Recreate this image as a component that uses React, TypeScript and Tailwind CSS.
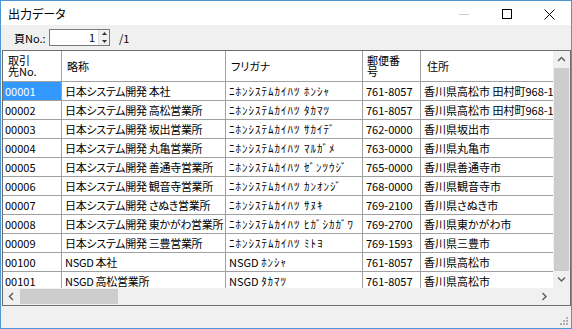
import React from "react";

const rows: string[][] = [
  ["00001", "日本システム開発 本社", "ﾆﾎﾝｼｽﾃﾑｶｲﾊﾂ ﾎﾝｼｬ", "761-8057", "香川県高松市 田村町968-1"],
  ["00002", "日本システム開発 高松営業所", "ﾆﾎﾝｼｽﾃﾑｶｲﾊﾂ ﾀｶﾏﾂ", "761-8057", "香川県高松市 田村町968-1"],
  ["00003", "日本システム開発 坂出営業所", "ﾆﾎﾝｼｽﾃﾑｶｲﾊﾂ ｻｶｲﾃﾞ", "762-0000", "香川県坂出市"],
  ["00004", "日本システム開発 丸亀営業所", "ﾆﾎﾝｼｽﾃﾑｶｲﾊﾂ ﾏﾙｶﾞﾒ", "763-0000", "香川県丸亀市"],
  ["00005", "日本システム開発 善通寺営業所", "ﾆﾎﾝｼｽﾃﾑｶｲﾊﾂ ｾﾞﾝﾂｳｼﾞ", "765-0000", "香川県善通寺市"],
  ["00006", "日本システム開発 観音寺営業所", "ﾆﾎﾝｼｽﾃﾑｶｲﾊﾂ ｶﾝｵﾝｼﾞ", "768-0000", "香川県観音寺市"],
  ["00007", "日本システム開発 さぬき営業所", "ﾆﾎﾝｼｽﾃﾑｶｲﾊﾂ ｻﾇｷ", "769-2100", "香川県さぬき市"],
  ["00008", "日本システム開発 東かがわ営業所", "ﾆﾎﾝｼｽﾃﾑｶｲﾊﾂ ﾋｶﾞｼｶｶﾞﾜ", "769-2700", "香川県東かがわ市"],
  ["00009", "日本システム開発 三豊営業所", "ﾆﾎﾝｼｽﾃﾑｶｲﾊﾂ ﾐﾄﾖ", "769-1593", "香川県三豊市"],
  ["00100", "NSGD 本社", "NSGD ﾎﾝｼｬ", "761-8057", "香川県高松市"],
  ["00101", "NSGD 高松営業所", "NSGD ﾀｶﾏﾂ", "761-8057", "香川県高松市"],
];

const Chevron = ({ dir }: { dir: "up" | "down" | "left" | "right" }) => {
  const pts: Record<string, string> = {
    up: "1,5 4.5,1.5 8,5",
    down: "1,1.5 4.5,5 8,1.5",
    left: "5,1 1.5,4.5 5,8",
    right: "1.5,1 5,4.5 1.5,8",
  };
  const vert = dir === "up" || dir === "down";
  return (
    <svg width={vert ? 9 : 7} height={vert ? 7 : 9} viewBox={vert ? "0 0 9 7" : "0 0 7 9"}>
      <polyline points={pts[dir]} fill="none" stroke="#606060" strokeWidth="1.5" />
    </svg>
  );
};

const Kana = ({ text }: { text: string }) => {
  if (text.startsWith("NSGD ")) {
    return (
      <>
        <span className="tracking-normal">NSGD </span>
        {text.slice(5)}
      </>
    );
  }
  return <>{text}</>;
};

export default function App() {
  return (
    <div className="w-[572px] h-[329px] border border-[#4e95d3] flex flex-col bg-[#f0f0f0] text-[11px] text-black overflow-hidden font-[family-name:'Noto_Sans_CJK_JP','Liberation_Sans',sans-serif] [font-feature-settings:'palt']">
      {/* Title bar */}
      <div className="h-[24px] bg-white flex items-center shrink-0">
        <div className="pl-[7px] pt-[1px] flex-1 leading-[12px] text-[12px]">出力データ</div>
        <div className="flex h-full">
          <div className="w-[43px] flex items-center justify-center pt-[2px]">
            <div className="w-[10px] h-[1px] bg-[#c8c8c8]" />
          </div>
          <div className="w-[43px] flex items-center justify-center pt-[2px]">
            <div className="w-[10px] h-[10px] border border-black" />
          </div>
          <div className="w-[43px] flex items-center justify-center pt-[2px]">
            <svg width="11" height="11" viewBox="0 0 11 11">
              <path d="M0.5 0.5 L10.5 10.5 M10.5 0.5 L0.5 10.5" stroke="#000" strokeWidth="1" />
            </svg>
          </div>
        </div>
      </div>

      {/* Toolbar */}
      <div className="h-[25px] flex items-center shrink-0">
        <div className="pl-[13px] w-[47px] leading-[12px] whitespace-nowrap">頁No.:</div>
        <div className="ml-[1px] w-[61px] h-[17px] border border-[#7a7a7a] bg-white flex">
          <div className="flex-1 text-right pr-[3px] leading-[15px]">1</div>
          <div className="w-[11px] flex flex-col border-l border-[#e0e0e0] bg-[#f0f0f0]">
            <div className="flex-1 flex items-center justify-center">
              <svg width="5" height="3" viewBox="0 0 5 3"><polygon points="0,3 2.5,0 5,3" fill="#333" /></svg>
            </div>
            <div className="flex-1 flex items-center justify-center">
              <svg width="5" height="3" viewBox="0 0 5 3"><polygon points="0,0 2.5,3 5,0" fill="#333" /></svg>
            </div>
          </div>
        </div>
        <div className="ml-[9px] leading-[12px]">/1</div>
      </div>

      {/* Grid */}
      <div className="ml-[1px] h-[256px] shrink-0 border border-[#6e6e6e] flex">
        <div className="flex-1 flex flex-col min-w-0">
          <div className="flex-1 bg-white overflow-hidden">
            {/* Header */}
            <div className="flex h-[31px] border-b border-[#a0a0a0] whitespace-nowrap">
              <div className="w-[59px] shrink-0 border-r border-[#a0a0a0] pl-[5px] leading-[11px] flex flex-col justify-center">
                <span>取引</span>
                <span>先No.</span>
              </div>
              <div className="w-[164px] shrink-0 border-r border-[#a0a0a0] pl-[5px] flex items-center">略称</div>
              <div className="w-[137px] shrink-0 border-r border-[#a0a0a0] pl-[5px] flex items-center">フリガナ</div>
              <div className="w-[58px] shrink-0 border-r border-[#a0a0a0] pl-[4px] leading-[11px] flex flex-col justify-center">
                <span>郵便番</span>
                <span>号</span>
              </div>
              <div className="w-[160px] shrink-0 pl-[6px] flex items-center">住所</div>
            </div>
            {/* Rows */}
            {rows.map((r, i) => (
              <div key={r[0]} className="flex h-[19px] border-b border-[#a0a0a0] whitespace-nowrap leading-[18px]">
                <div
                  className={
                    i === 0
                      ? "w-[59px] shrink-0 border-r border-[#a0a0a0] pl-[2px] bg-[#3399ff] text-white"
                      : "w-[59px] shrink-0 border-r border-[#a0a0a0] pl-[2px]"
                  }
                >
                  {r[0]}
                </div>
                <div className="w-[164px] shrink-0 border-r border-[#a0a0a0] pl-[3px] overflow-hidden tracking-[-0.3px]">{r[1]}</div>
                <div className="w-[137px] shrink-0 border-r border-[#a0a0a0] pl-[3px] overflow-hidden tracking-[1px] [font-feature-settings:normal]">
                  <Kana text={r[2]} />
                </div>
                <div className="w-[58px] shrink-0 border-r border-[#a0a0a0] pl-[3px]">{r[3]}</div>
                <div className="w-[160px] shrink-0 pl-[3px]">{r[4]}</div>
              </div>
            ))}
          </div>
          {/* Horizontal scrollbar */}
          <div className="h-[17px] shrink-0 flex bg-[#f0f0f0]">
            <div className="w-[17px] flex items-center justify-center">
              <Chevron dir="left" />
            </div>
            <div className="flex-1 py-[1px]">
              <div className="w-[98px] h-full bg-[#cdcdcd]" />
            </div>
            <div className="w-[17px] flex items-center justify-center">
              <Chevron dir="right" />
            </div>
          </div>
        </div>
        {/* Vertical scrollbar */}
        <div className="w-[17px] shrink-0 flex flex-col bg-[#f0f0f0]">
          <div className="h-[17px] flex items-center justify-center">
            <Chevron dir="up" />
          </div>
          <div className="flex-1 px-[1px]">
            <div className="w-full h-[203px] bg-[#cdcdcd]" />
          </div>
          <div className="h-[17px] flex items-center justify-center">
            <Chevron dir="down" />
          </div>
          <div className="h-[17px]" />
        </div>
      </div>

      {/* Footer */}
      <div className="flex-1 flex justify-end items-end pr-[2px] pb-[2px]">
        <svg width="10" height="10" viewBox="0 0 10 10">
          <rect x="7" y="1" width="2" height="2" fill="#b0b0b0" />
          <rect x="4" y="4" width="2" height="2" fill="#b0b0b0" />
          <rect x="7" y="4" width="2" height="2" fill="#b0b0b0" />
          <rect x="1" y="7" width="2" height="2" fill="#b0b0b0" />
          <rect x="4" y="7" width="2" height="2" fill="#b0b0b0" />
          <rect x="7" y="7" width="2" height="2" fill="#b0b0b0" />
        </svg>
      </div>
    </div>
  );
}
